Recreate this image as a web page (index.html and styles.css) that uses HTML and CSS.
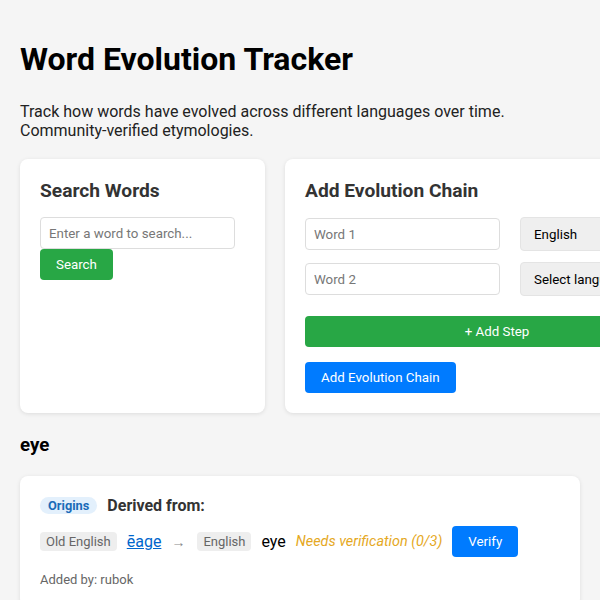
FILE: index.html
```html
<!DOCTYPE html>
<html lang="en">
<head>
    <meta charset="UTF-8">
    <meta name="viewport" content="width=device-width, initial-scale=1.0">
    <title>Word Evolution Tracker</title>
    <link rel="stylesheet" href="styles.css">
</head>
<body>
    <div class="container">
        <h1>Word Evolution Tracker</h1>
        <p class="intro">Track how words have evolved across different languages over time. Community-verified etymologies.</p>

        <div class="panels">
            <div class="card search-card">
                <h2>Search Words</h2>
                <input type="text" class="search-input" placeholder="Enter a word to search...">
                <button class="btn btn-green">Search</button>
            </div>

            <div class="card chain-card">
                <h2>Add Evolution Chain</h2>
                <div class="step-row">
                    <input type="text" placeholder="Word 1">
                    <select>
                        <option>English</option>
                    </select>
                </div>
                <div class="step-row">
                    <input type="text" placeholder="Word 2">
                    <select>
                        <option>Select language</option>
                    </select>
                </div>
                <button class="btn btn-green btn-wide">+ Add Step</button>
                <button class="btn btn-blue">Add Evolution Chain</button>
            </div>
        </div>

        <div id="results">
            <h3 class="word-title">eye</h3>
            <div class="card evo-card">
                <div class="evo-head">
                    <span class="badge">Origins</span>
                    <span class="derived">Derived from:</span>
                </div>
                <div class="evo-chain">
                    <span class="lang">Old English</span>
                    <a href="#" class="word-link">ēage</a>
                    <span class="arrow">→</span>
                    <span class="lang">English</span>
                    <span class="word">eye</span>
                    <span class="pending">Needs verification (0/3)</span>
                    <button class="btn btn-blue">Verify</button>
                </div>
                <div class="added-by">Added by: rubok</div>
            </div>
        </div>
    </div>
</body>
</html>
```

FILE: styles.css
```css
body {
    margin: 0;
    padding: 20px;
    font-family: Roboto, "Liberation Sans", sans-serif;
    background-color: #f5f5f5;
    color: #000;
}
h1 {
    font-size: 32px;
    margin: 20px 0 24px;
}
.intro {
    font-size: 16px;
    color: #222;
    margin: 0 0 19px;
}
.panels {
    display: flex;
    gap: 20px;
    align-items: stretch;
}
.card {
    background: white;
    border-radius: 8px;
    padding: 20px;
    box-shadow: 0 1px 4px rgba(0,0,0,0.1);
    box-sizing: border-box;
}
.card h2 {
    font-size: 1.2em;
    color: #333;
    margin: 0 0 15px;
}
.search-card {
    flex: 0 0 245px;
}
.chain-card {
    flex: 0 0 424px;
}
input {
    font-family: inherit;
    font-size: 13.33px;
    height: 32px;
    padding: 0 8px;
    border: 1px solid #ddd;
    border-radius: 4px;
    box-sizing: border-box;
}
input::placeholder {
    color: #777;
}
.search-input {
    display: block;
    width: 195px;
}
.step-row {
    display: flex;
    gap: 20px;
    align-items: center;
    margin-bottom: 11px;
}
.step-row input {
    width: 195px;
    flex: 0 0 195px;
}
.step-row select {
    flex: 1;
    font-family: inherit;
    font-size: 13.33px;
    height: 34px;
    padding: 0 9px;
    background: #efefef;
    border: 1px solid #e4e4e4;
    border-radius: 4px;
    color: #000;
}
.btn {
    font-family: inherit;
    font-size: 13.33px;
    color: white;
    border: none;
    border-radius: 4px;
    padding: 8px 16px;
    cursor: pointer;
}
.btn-green {
    background-color: #28a745;
}
.btn-blue {
    background-color: #007bff;
}
.btn-wide {
    display: block;
    width: 100%;
    margin: 20px 0 15px;
}
.word-title {
    font-size: 1.17em;
    margin: 21px 0 20px;
}
.evo-head {
    display: flex;
    align-items: center;
    gap: 10px;
}
.badge {
    background: #e3f0fc;
    color: #1a6bb8;
    font-size: 0.8em;
    font-weight: bold;
    padding: 1px 8px;
    border-radius: 10px;
}
.derived {
    font-size: 16px;
    font-weight: bold;
    color: #333;
}
.evo-chain {
    display: flex;
    align-items: center;
    gap: 10px;
    margin: 11px 0 15px;
    font-size: 16px;
}
.lang {
    background: #eee;
    color: #666;
    font-size: 13px;
    padding: 2px 6px;
    border-radius: 4px;
}
.word-link {
    color: #0066cc;
}
.arrow {
    color: #888;
    font-size: 14px;
    margin-right: 2px;
}
.pending {
    color: #e5a823;
    font-style: italic;
    font-size: 0.9em;
}
.added-by {
    font-size: 13px;
    color: #666;
}
```
